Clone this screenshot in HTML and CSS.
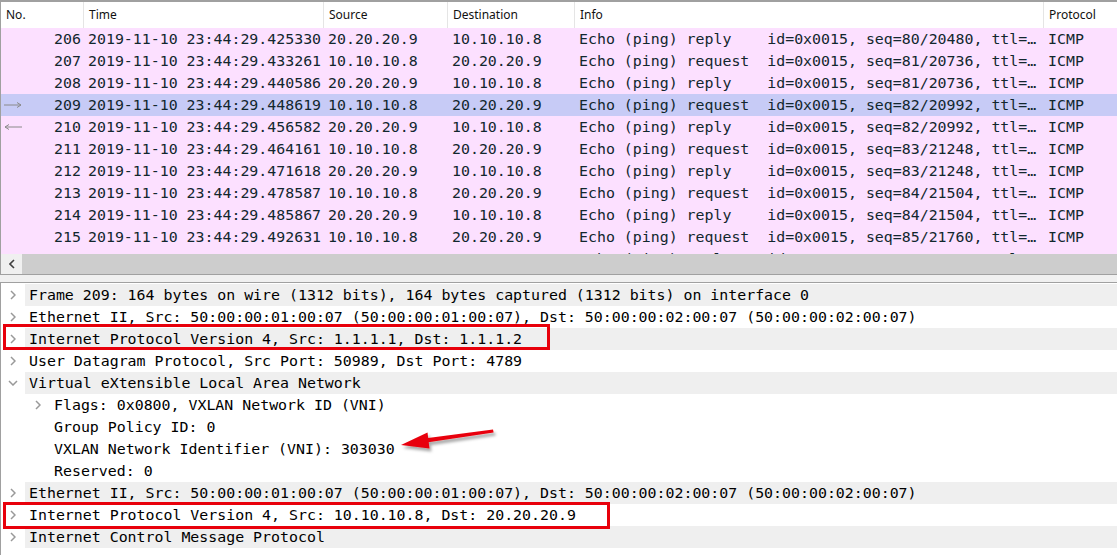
FILE: index.html
```html
<!DOCTYPE html>
<html lang="en">

<head>
  <meta charset="UTF-8">
  <title>Packet capture - VXLAN</title>
  <link rel="stylesheet" href="styles.css">
</head>

<body>
  <div class="packet-list">
    <div class="list-header cols">
      <span class="cell">No.</span>
      <span class="cell">Time</span>
      <span class="cell">Source</span>
      <span class="cell">Destination</span>
      <span class="cell">Info</span>
      <span class="cell">Protocol</span>
    </div>

    <div class="list-body">
      <div class="packet cols"><span class="cell num"><span class="n">206</span></span><span class="cell">2019-11-10 23:44:29.425330</span><span class="cell">20.20.20.9</span><span class="cell">10.10.10.8</span><span class="cell">Echo (ping) reply    id=0x0015, seq=80/20480, ttl=…</span><span class="cell">ICMP</span></div>
      <div class="packet cols"><span class="cell num"><span class="n">207</span></span><span class="cell">2019-11-10 23:44:29.433261</span><span class="cell">10.10.10.8</span><span class="cell">20.20.20.9</span><span class="cell">Echo (ping) request  id=0x0015, seq=81/20736, ttl=…</span><span class="cell">ICMP</span></div>
      <div class="packet cols"><span class="cell num"><span class="n">208</span></span><span class="cell">2019-11-10 23:44:29.440586</span><span class="cell">20.20.20.9</span><span class="cell">10.10.10.8</span><span class="cell">Echo (ping) reply    id=0x0015, seq=81/20736, ttl=…</span><span class="cell">ICMP</span></div>
      <div class="packet cols selected"><span class="cell num">
          <svg class="related" width="20" height="8" viewBox="0 0 20 8"><path d="M1 4H18M14 1.5L18 4L14 6.5" fill="none" stroke="#8a8a8a" stroke-width="1"/></svg>
          <span class="n">209</span></span><span class="cell">2019-11-10 23:44:29.448619</span><span class="cell">10.10.10.8</span><span class="cell">20.20.20.9</span><span class="cell">Echo (ping) request  id=0x0015, seq=82/20992, ttl=…</span><span class="cell">ICMP</span></div>
      <div class="packet cols"><span class="cell num">
          <svg class="related" width="20" height="8" viewBox="0 0 20 8"><path d="M2 4H19M6 1.5L2 4L6 6.5" fill="none" stroke="#8a8a8a" stroke-width="1"/></svg>
          <span class="n">210</span></span><span class="cell">2019-11-10 23:44:29.456582</span><span class="cell">20.20.20.9</span><span class="cell">10.10.10.8</span><span class="cell">Echo (ping) reply    id=0x0015, seq=82/20992, ttl=…</span><span class="cell">ICMP</span></div>
      <div class="packet cols"><span class="cell num"><span class="n">211</span></span><span class="cell">2019-11-10 23:44:29.464161</span><span class="cell">10.10.10.8</span><span class="cell">20.20.20.9</span><span class="cell">Echo (ping) request  id=0x0015, seq=83/21248, ttl=…</span><span class="cell">ICMP</span></div>
      <div class="packet cols"><span class="cell num"><span class="n">212</span></span><span class="cell">2019-11-10 23:44:29.471618</span><span class="cell">20.20.20.9</span><span class="cell">10.10.10.8</span><span class="cell">Echo (ping) reply    id=0x0015, seq=83/21248, ttl=…</span><span class="cell">ICMP</span></div>
      <div class="packet cols"><span class="cell num"><span class="n">213</span></span><span class="cell">2019-11-10 23:44:29.478587</span><span class="cell">10.10.10.8</span><span class="cell">20.20.20.9</span><span class="cell">Echo (ping) request  id=0x0015, seq=84/21504, ttl=…</span><span class="cell">ICMP</span></div>
      <div class="packet cols"><span class="cell num"><span class="n">214</span></span><span class="cell">2019-11-10 23:44:29.485867</span><span class="cell">20.20.20.9</span><span class="cell">10.10.10.8</span><span class="cell">Echo (ping) reply    id=0x0015, seq=84/21504, ttl=…</span><span class="cell">ICMP</span></div>
      <div class="packet cols"><span class="cell num"><span class="n">215</span></span><span class="cell">2019-11-10 23:44:29.492631</span><span class="cell">10.10.10.8</span><span class="cell">20.20.20.9</span><span class="cell">Echo (ping) request  id=0x0015, seq=85/21760, ttl=…</span><span class="cell">ICMP</span></div>
      <div class="packet cols"><span class="cell num"><span class="n">216</span></span><span class="cell">2019-11-10 23:44:29.499750</span><span class="cell">20.20.20.9</span><span class="cell">10.10.10.8</span><span class="cell">Echo (ping) reply    id=0x0015, seq=85/21760, ttl=…</span><span class="cell">ICMP</span></div>
    </div>

    <div class="hscroll">
      <div class="hscroll-btn">
        <svg width="6" height="10" viewBox="0 0 6 10"><polyline points="5,1 1,5 5,9" fill="none" stroke="#404040" stroke-width="1.6"/></svg>
      </div>
      <div class="hscroll-thumb"></div>
    </div>
  </div>

  <div class="splitter"></div>

  <div class="details">
    <div class="node">
      <span class="branch"><svg class="chev" width="6" height="10" viewBox="0 0 6 10"><polyline points="1,1 5,5 1,9"/></svg></span>
      <span class="label alt">Frame 209: 164 bytes on wire (1312 bits), 164 bytes captured (1312 bits) on interface 0</span>
    </div>
    <div class="node">
      <span class="branch"><svg class="chev" width="6" height="10" viewBox="0 0 6 10"><polyline points="1,1 5,5 1,9"/></svg></span>
      <span class="label">Ethernet II, Src: 50:00:00:01:00:07 (50:00:00:01:00:07), Dst: 50:00:00:02:00:07 (50:00:00:02:00:07)</span>
    </div>
    <div class="node">
      <span class="branch"><svg class="chev" width="6" height="10" viewBox="0 0 6 10"><polyline points="1,1 5,5 1,9"/></svg></span>
      <span class="label alt">Internet Protocol Version 4, Src: 1.1.1.1, Dst: 1.1.1.2</span>
      <span class="mark mark-outer"></span>
    </div>
    <div class="node">
      <span class="branch"><svg class="chev" width="6" height="10" viewBox="0 0 6 10"><polyline points="1,1 5,5 1,9"/></svg></span>
      <span class="label">User Datagram Protocol, Src Port: 50989, Dst Port: 4789</span>
    </div>
    <div class="node">
      <span class="branch open"><svg class="chev" width="10" height="6" viewBox="0 0 10 6"><polyline points="1,1 5,5 9,1"/></svg></span>
      <span class="label alt">Virtual eXtensible Local Area Network</span>
    </div>
    <div class="node child">
      <span class="branch"><svg class="chev" width="6" height="10" viewBox="0 0 6 10"><polyline points="1,1 5,5 1,9"/></svg></span>
      <span class="label">Flags: 0x0800, VXLAN Network ID (VNI)</span>
    </div>
    <div class="node child">
      <span class="branch"></span>
      <span class="label">Group Policy ID: 0</span>
    </div>
    <div class="node child">
      <span class="branch"></span>
      <span class="label">VXLAN Network Identifier (VNI): 303030</span>
    </div>
    <div class="node child">
      <span class="branch"></span>
      <span class="label">Reserved: 0</span>
    </div>
    <div class="node">
      <span class="branch"><svg class="chev" width="6" height="10" viewBox="0 0 6 10"><polyline points="1,1 5,5 1,9"/></svg></span>
      <span class="label alt">Ethernet II, Src: 50:00:00:01:00:07 (50:00:00:01:00:07), Dst: 50:00:00:02:00:07 (50:00:00:02:00:07)</span>
    </div>
    <div class="node">
      <span class="branch"><svg class="chev" width="6" height="10" viewBox="0 0 6 10"><polyline points="1,1 5,5 1,9"/></svg></span>
      <span class="label">Internet Protocol Version 4, Src: 10.10.10.8, Dst: 20.20.20.9</span>
      <span class="mark mark-inner"></span>
    </div>
    <div class="node">
      <span class="branch"><svg class="chev" width="6" height="10" viewBox="0 0 6 10"><polyline points="1,1 5,5 1,9"/></svg></span>
      <span class="label alt">Internet Control Message Protocol</span>
    </div>

    <!-- annotation arrow pointing at the VNI value -->
    <svg class="callout" width="110" height="34" viewBox="0 0 110 34">
      <defs>
        <filter id="shadow" x="-20%" y="-50%" width="140%" height="200%">
          <feDropShadow dx="2" dy="3" stdDeviation="1.4" flood-color="#000" flood-opacity="0.35"/>
        </filter>
      </defs>
      <g filter="url(#shadow)" fill="#e8000b">
        <polygon points="98,6.6 98.6,9.6 30,19.8 29.2,15.4"/>
        <polygon points="6,22 32.5,9.5 34.5,25.5"/>
      </g>
    </svg>
  </div>
</body>

</html>
```

FILE: styles.css
```css
* {
  box-sizing: border-box;
  margin: 0;
  padding: 0;
}

body {
  font-family: "DejaVu Sans Mono", "Liberation Mono", monospace;
  font-size: 14.9px;
  background: #fff;
  width: 1117px;
  height: 555px;
  overflow: hidden;
}

/* packet list */

.packet-list {
  border-top: 2px solid #a0a0a0;
  border-left: 1px solid #a0a0a0;
}

.cols {
  display: grid;
  grid-template-columns: 83px 240px 124px 127px 469px 1fr;
}

.list-header {
  height: 26px;
  font-family: "Noto Sans", "Open Sans", sans-serif;
  font-size: 12px;
  color: #111;
  background: #fff;
}

.list-header .cell {
  line-height: 26px;
  padding-left: 5px;
  border-right: 1px solid #e5e5e5;
}

.list-header .cell:last-child {
  border-right: none;
}

.list-body {
  height: 226px;
  overflow: hidden;
}

.packet {
  height: 22px;
  line-height: 22px;
  background: #fce0ff;
  color: #12272e;
  white-space: pre;
}

.packet.selected {
  background: #c7cbf6;
}

.packet .cell {
  padding-left: 4px;
  overflow: hidden;
}

.packet .num {
  display: flex;
  align-items: center;
  padding: 0 3px 0 2px;
}

.num .n {
  margin-left: auto;
}

.related {
  display: block;
}

.hscroll {
  display: flex;
  height: 20px;
}

.hscroll-btn {
  width: 21px;
  background: #f0f0f0;
  display: flex;
  align-items: center;
  justify-content: center;
}

.hscroll-thumb {
  flex: 1;
  background: #cdcdcd;
}

.splitter {
  height: 9px;
  background: #f0f0f0;
  border-top: 1px solid #a0a0a0;
  border-bottom: 1px solid #a0a0a0;
}

/* packet details tree */

.details {
  position: relative;
  height: 272px;
  padding-top: 1px;
  border-left: 1px solid #a0a0a0;
  color: #000;
}

.node {
  position: relative;
  display: flex;
  height: 22px;
  line-height: 22px;
}

.branch {
  flex: none;
  width: 24px;
  display: flex;
  align-items: center;
  padding-left: 9px;
}

.branch.open {
  padding-left: 7px;
}

.node.child .branch {
  width: 49px;
  padding-left: 34px;
}

.chev {
  display: block;
  fill: none;
  stroke: #999;
  stroke-width: 1.5;
}

.label {
  flex: 1;
  padding-left: 4px;
  white-space: pre;
}

.label.alt {
  background: #efefef;
}

.mark {
  position: absolute;
  z-index: 2;
  border: 3px solid #e8000b;
  pointer-events: none;
}

.mark-outer {
  left: 2px;
  top: -4px;
  width: 547px;
  height: 26px;
}

.mark-inner {
  left: 2px;
  top: -2px;
  width: 607px;
  height: 27px;
}

.callout {
  position: absolute;
  z-index: 2;
  left: 394px;
  top: 140px;
}
```
